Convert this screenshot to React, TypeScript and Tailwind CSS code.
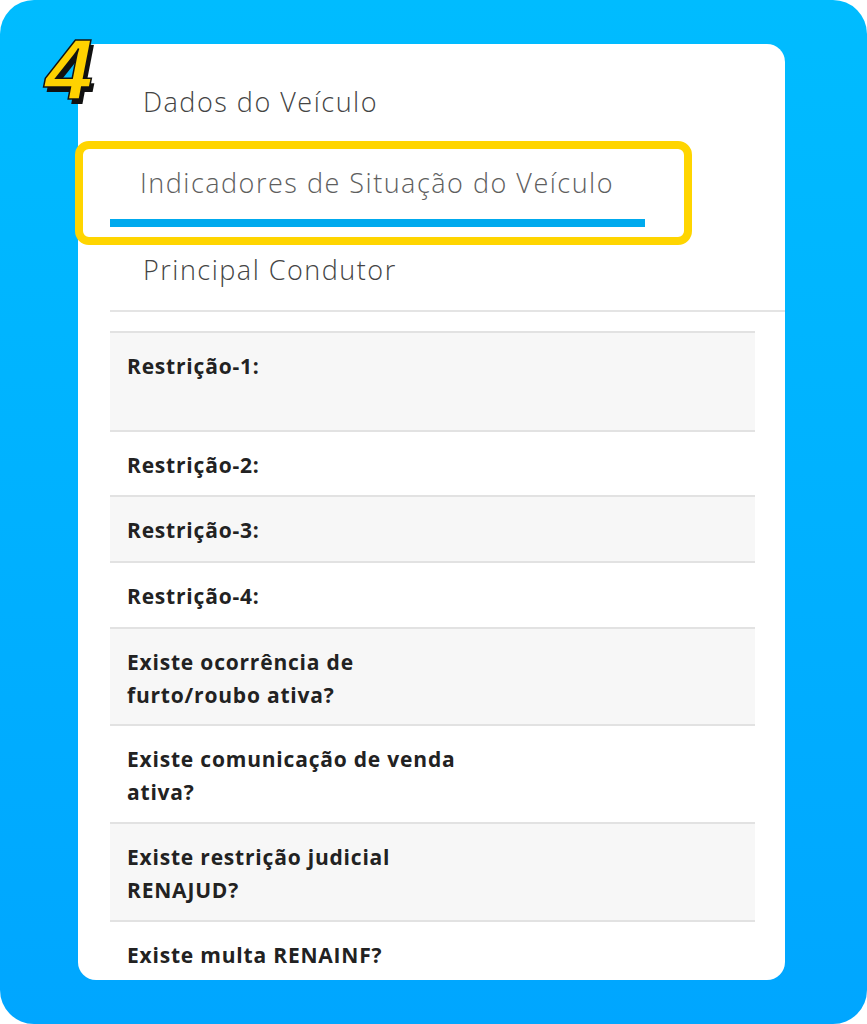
const rows: { label: string; h: string; gray: boolean }[] = [
  { label: "Restrição-1:", h: "h-[99px]", gray: true },
  { label: "Restrição-2:", h: "h-[65px]", gray: false },
  { label: "Restrição-3:", h: "h-[66px]", gray: true },
  { label: "Restrição-4:", h: "h-[66px]", gray: false },
  { label: "Existe ocorrência de furto/roubo ativa?", h: "h-[97px]", gray: true },
  { label: "Existe comunicação de venda ativa?", h: "h-[98px]", gray: false },
  { label: "Existe restrição judicial RENAJUD?", h: "h-[98px]", gray: true },
  { label: "Existe multa RENAINF?", h: "h-[58px]", gray: false },
];

export default function App() {
  return (
    <div className="h-[1024px] w-[867px] overflow-hidden bg-white">
      <div className="relative h-full w-full overflow-hidden rounded-[34px] bg-gradient-to-b from-[#00bcff] to-[#00a6ff] pt-[44px] pl-[78px]">
        <span className="absolute left-[45px] top-[26px] z-10 font-['Liberation_Sans',sans-serif] text-[86px] font-bold italic leading-none text-[#ffd200] [-webkit-text-stroke:1.5px_#111] [text-shadow:3px_5px_0_#111]">
          4
        </span>

        <div className="h-[936px] w-[707px] rounded-[18px] bg-white font-['Open_Sans',sans-serif]">
          <div className="h-[97px] pl-[65px] pt-[41px]">
            <span className="block text-[27px] font-light leading-[34px] tracking-[1.5px] text-[#444]">
              Dados do Veículo
            </span>
          </div>

          <div className="relative -ml-[3px] h-[104px] w-[617px] rounded-[14px] border-[8px] border-[#ffd500]">
            <div className="pl-[57px] pt-[17px] text-[27px] font-light leading-[34px] tracking-[1.5px] text-[#5e5e5e]">
              Indicadores de Situação do Veículo
            </div>
            <div className="ml-[27px] mt-[19px] h-[8px] w-[535px] bg-[#00aaee]" />
          </div>

          <div className="h-[65px] pl-[65px] pt-[8px]">
            <span className="block text-[27px] font-light leading-[34px] tracking-[1.5px] text-[#444]">
              Principal Condutor
            </span>
          </div>

          <div className="ml-[32px] h-[2px] bg-[#e4e4e4]" />

          <div className="ml-[32px] mt-[19px] w-[645px]">
            {rows.map((r) => (
              <div
                key={r.label}
                className={`${r.h} border-t-2 border-[#e2e2e2] px-[17px] pt-[17px] ${
                  r.gray ? "bg-[#f7f7f7]" : "bg-white"
                }`}
              >
                <div className="w-[345px] text-[21px] font-bold leading-[33px] tracking-[0.8px] text-[#222]">
                  {r.label}
                </div>
              </div>
            ))}
          </div>
        </div>
      </div>
    </div>
  );
}
